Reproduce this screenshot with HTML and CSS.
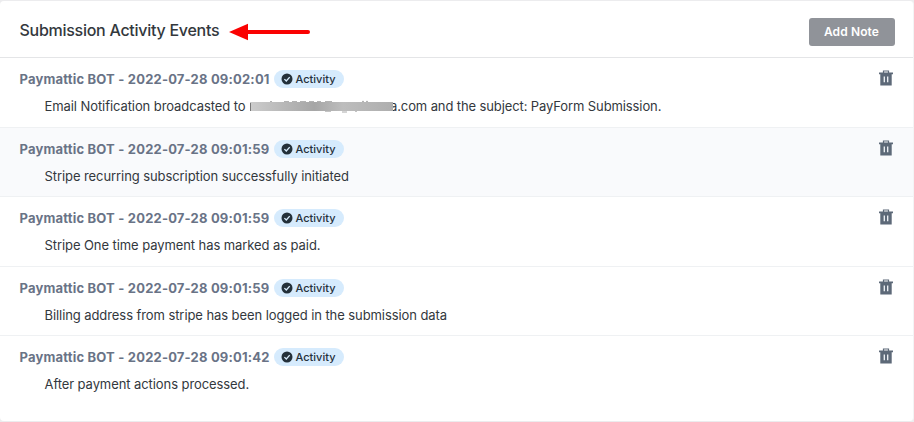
FILE: index.html
```html
<!DOCTYPE html>
<html lang="en">
<head>
<meta charset="utf-8">
<title>Submission Activity Events</title>
<link rel="stylesheet" href="styles.css">
</head>
<body>
<svg class="defs" width="0" height="0" aria-hidden="true">
  <symbol id="check" viewBox="0 0 12 12"><circle cx="6" cy="6" r="5.5" fill="#23303a"/><path d="M3.4 6.1 5.3 8l3.4-3.9" fill="none" stroke="#d8ecfc" stroke-width="1.3"/></symbol>
  <symbol id="trash" viewBox="0 0 14 16"><path d="M4.5 3V1h5v2" fill="none" stroke="#5d6978" stroke-width="1.2"/><path d="M0 2.6h14v1.7H0zM1.3 4h11.4v11.5H1.3z" fill="#5d6978"/><path d="M5.3 6.5v5.8M8.7 6.5v5.8" stroke="#f2f5f8" stroke-width="1.3"/></symbol>
</svg>
<section class="card">
  <header class="head">
    <h1 class="title">Submission Activity Events</h1>
    <svg class="arrow" width="82" height="18" viewBox="0 0 82 18"><path d="M18 9h61" stroke="#fa0202" stroke-width="4" stroke-linecap="round"/><path d="M0 9 19 .7v16.6z" fill="#fa0202"/></svg>
    <button class="add">Add Note</button>
  </header>
  <article class="event">
    <div class="meta"><span class="who">Paymattic BOT - 2022-07-28 09:02:01</span><span class="tag"><svg class="check"><use href="#check"/></svg><span>Activity</span></span><svg class="trash"><use href="#trash"/></svg></div>
    <p class="text"><span class="lead">Email Notification broadcasted to</span><span class="tail">a.com and the subject: PayForm Submission.</span><svg class="redacted" width="146" height="16" viewBox="0 0 146 16"><defs><linearGradient id="g"><stop offset="0" stop-color="#ccc"/><stop offset=".45" stop-color="#a6a6a6"/><stop offset=".65" stop-color="#bdbdbd"/><stop offset="1" stop-color="#aeaeae"/></linearGradient></defs><path d="M20 3.6h2M34 3.6h5M42 3.6h5M50 3.6h6M59 3.6h5M67 3.6h4M75 3.6h7M112 3.4h2M116 3.4h2M75 13.2h6M92 14h5M105 13.2h2" stroke="#aaa" stroke-width="1"/><path d="M0 4h143v9H0z" fill="url(#g)"/><path d="M.5 5v8" stroke="#777"/></svg></p>
  </article>
  <article class="event shaded">
    <div class="meta"><span class="who">Paymattic BOT - 2022-07-28 09:01:59</span><span class="tag"><svg class="check"><use href="#check"/></svg><span>Activity</span></span><svg class="trash"><use href="#trash"/></svg></div>
    <p class="text"><span>Stripe recurring subscription successfully initiated</span></p>
  </article>
  <article class="event">
    <div class="meta"><span class="who">Paymattic BOT - 2022-07-28 09:01:59</span><span class="tag"><svg class="check"><use href="#check"/></svg><span>Activity</span></span><svg class="trash"><use href="#trash"/></svg></div>
    <p class="text"><span>Stripe One time payment has marked as paid.</span></p>
  </article>
  <article class="event">
    <div class="meta"><span class="who">Paymattic BOT - 2022-07-28 09:01:59</span><span class="tag"><svg class="check"><use href="#check"/></svg><span>Activity</span></span><svg class="trash"><use href="#trash"/></svg></div>
    <p class="text"><span>Billing address from stripe has been logged in the submission data</span></p>
  </article>
  <article class="event">
    <div class="meta"><span class="who">Paymattic BOT - 2022-07-28 09:01:42</span><span class="tag"><svg class="check"><use href="#check"/></svg><span>Activity</span></span><svg class="trash"><use href="#trash"/></svg></div>
    <p class="text"><span>After payment actions processed.</span></p>
  </article>
</section>
</body>
</html>
```
FILE: styles.css
```css
* { box-sizing: border-box; }
body { margin: 0; height: 422px; padding-top: 1px; overflow: hidden; background: #ececee; font-family: Inter, "Liberation Sans", sans-serif; color: #33383d; }
.defs { position: absolute; }
.card { height: 420px; background: #fff; border-radius: 4px; border-right: 1px solid #f3f4f5; }
.head { height: 57px; display: flex; align-items: center; padding: 4px 18.5px 0 19.5px; border-bottom: 1px solid #e4e5e7; }
.title { margin: -3px 0 0; font-size: 16px; font-weight: 500; line-height: 22px; letter-spacing: -.27px; white-space: nowrap; width: 200px; }
.arrow { margin: 2px 0 0 9.5px; }
.add { margin: 1px 0 0 auto; width: 86px; height: 28px; padding: 0; border: 0; border-radius: 3px; background: #909399; color: #fff; font: 600 12px Inter, sans-serif; letter-spacing: .12px; }
.event { height: 69.5px; padding: 12.3px 20px 0 19.5px; border-bottom: 1px solid #eff1f3; }
.event:last-child { border-bottom: 0; }
.shaded { background: #f9fafc; }
.meta { display: flex; align-items: center; height: 18px; }
.who { width: 250.5px; white-space: nowrap; font-size: 13px; font-weight: 700; letter-spacing: .19px; color: #697386; }
.tag { display: flex; align-items: center; gap: 2.5px; width: 70px; height: 18px; margin-left: 4px; padding-left: 7px; border-radius: 9px; background: #d6ebfd; font-size: 11px; font-weight: 500; color: #25303b; }
.check { width: 12px; height: 12px; }
.trash { width: 14px; height: 16px; margin: -2px 0 0 auto; }
.text { position: relative; display: flex; align-items: center; height: 18px; margin: 8.8px 0 0 25px; font-size: 13px; letter-spacing: -.08px; white-space: nowrap; }
.lead { width: 345.5px; }
.tail { letter-spacing: -.11px; }
.redacted { position: absolute; left: 205.5px; top: 1px; }
```
